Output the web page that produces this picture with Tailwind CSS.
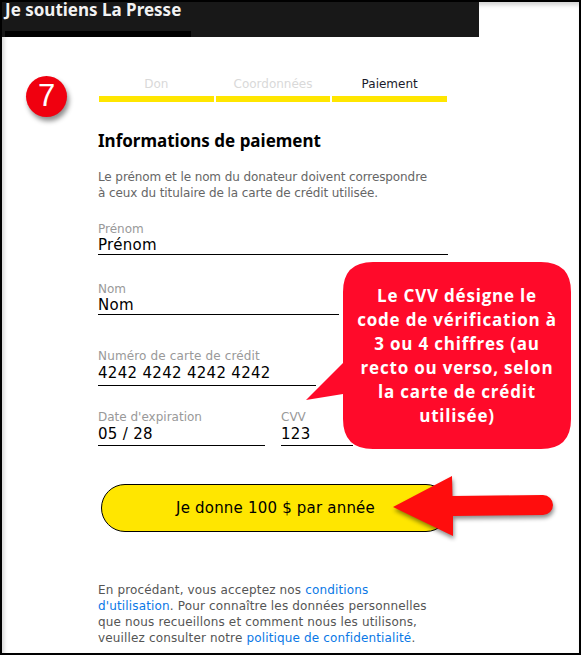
<!doctype html>
<html lang="fr">
<head>
<meta charset="utf-8">
<title>Je soutiens La Presse</title>
<script src="https://cdn.jsdelivr.net/npm/@tailwindcss/browser@4"></script>
</head>
<body class="bg-white">
<div class="relative w-[581px] h-[655px] overflow-hidden border-2 border-black bg-white shadow-[inset_2px_3px_4px_rgba(0,0,0,0.18)] font-['DejaVu_Sans',sans-serif]">

  <!-- header -->
  <header class="relative w-[477px] h-[35px] bg-[#181818]">
    <h1 class="pl-[3px] text-[17px] leading-[15px] font-bold text-[#f2f2f2] font-['Noto_Sans',sans-serif]">Je soutiens La Presse</h1>
    <div class="absolute left-[3px] bottom-0 w-[186px] h-[6px] bg-black"></div>
  </header>

  <main class="pl-[96px] w-[446px]">
    <!-- steps -->
    <div class="grid grid-cols-3 gap-[2px] ml-[1px] w-[348px] mt-[40px]">
      <div class="border-b-[6px] border-[#ffe600] h-[25px] text-center text-[12px] leading-[14px] text-[#d9d9d9]">Don</div>
      <div class="border-b-[6px] border-[#ffe600] h-[25px] text-center text-[12px] leading-[14px] text-[#d9d9d9]">Coordonnées</div>
      <div class="border-b-[6px] border-[#ffe600] h-[25px] text-center text-[12px] leading-[14px] text-[#1a1a2a]">Paiement</div>
    </div>

    <h2 class="mt-[28px] text-[17px] leading-[22px] font-bold text-black font-['Noto_Sans',sans-serif]">Informations de paiement</h2>
    <p class="mt-[17px] text-[12px] leading-[16px] text-[#666] tracking-[-0.1px]">Le prénom et le nom du donateur doivent correspondre<br>à ceux du titulaire de la carte de crédit utilisée.</p>

    <!-- form -->
    <div class="mt-[21px] w-[350px] h-[33px] border-b border-black">
      <div class="text-[12px] leading-[14px] text-[#999]">Prénom</div>
      <div class="text-[15px] leading-[18px] tracking-[0.3px] text-black">Prénom</div>
    </div>
    <div class="mt-[27px] w-[241px] h-[33px] border-b border-black">
      <div class="text-[12px] leading-[14px] text-[#999]">Nom</div>
      <div class="text-[15px] leading-[18px] tracking-[0.3px] text-black">Nom</div>
    </div>
    <div class="mt-[34px] w-[218px] h-[37px] border-b border-black">
      <div class="text-[12px] leading-[14px] tracking-[0.15px] text-[#999]">Numéro de carte de crédit</div>
      <div class="text-[15px] leading-[20px] tracking-[0.3px] text-black">4242 4242 4242 4242</div>
    </div>
    <div class="mt-[24px] flex gap-[16px]">
      <div class="w-[167px] h-[36px] border-b border-black">
        <div class="text-[12px] leading-[14px] text-[#999]">Date d'expiration</div>
        <div class="text-[15px] leading-[20px] tracking-[0.3px] text-black">05 / 28</div>
      </div>
      <div class="w-[72px] h-[36px] border-b border-black">
        <div class="text-[12px] leading-[14px] text-[#999]">CVV</div>
        <div class="text-[15px] leading-[20px] tracking-[0.3px] text-black">123</div>
      </div>
    </div>

    <button class="block mt-[38px] ml-[3px] w-[349px] h-[48px] rounded-full border border-black bg-[#ffe600] text-[15px] tracking-[0.2px] font-medium text-black">Je donne 100 $ par année</button>

    <p class="mt-[50px] whitespace-nowrap text-[12px] leading-[16px] tracking-[0.15px] text-[#555]">En procédant, vous acceptez nos <a class="text-[#0a78e6]">conditions</a><br><a class="text-[#0a78e6]">d'utilisation</a>. Pour connaître les données personnelles<br>que nous recueillons et comment nous les utilisons,<br>veuillez consulter notre <a class="text-[#0a78e6]">politique de confidentialité</a>.</p>
  </main>

  <!-- annotations -->
  <div class="absolute left-[24px] top-[74px] w-[41px] h-[41px] rounded-full bg-[#f0000f] shadow-[2px_4px_5px_rgba(0,0,0,0.45)] flex items-center justify-center text-white text-[31px] font-['Liberation_Sans',sans-serif]">7</div>

  <svg class="absolute left-[298px] top-[256px]" width="280" height="195" viewBox="300 258 280 195">
    <path d="M373 262 H541 Q571 262 571 292 V419 Q571 449 541 449 H373 Q343 449 343 419 V394 L306 400 L343 363 V292 Q343 262 373 262 Z" fill="#ff0a2a"/>
  </svg>
  <div class="absolute left-[341px] top-[282px] w-[228px] text-center text-white text-[17px] leading-[24px] tracking-[0.8px] font-bold font-['Open_Sans',sans-serif]">Le CVV désigne le<br>code de vérification à<br>3 ou 4 chiffres (au<br>recto ou verso, selon<br>la carte de crédit<br>utilisée)</div>

  <svg class="absolute left-[388px] top-[470px]" width="176" height="76" viewBox="390 472 176 76">
    <path d="M393 507 L452 476 L452.500 496 L543 495 A10 10 0 0 1 543 515 L453 516 L453 536 Z" fill="#ff0d0d" style="filter:drop-shadow(1px 3px 2px rgba(0,0,0,0.45))"/>
  </svg>
</div>
</body>
</html>
